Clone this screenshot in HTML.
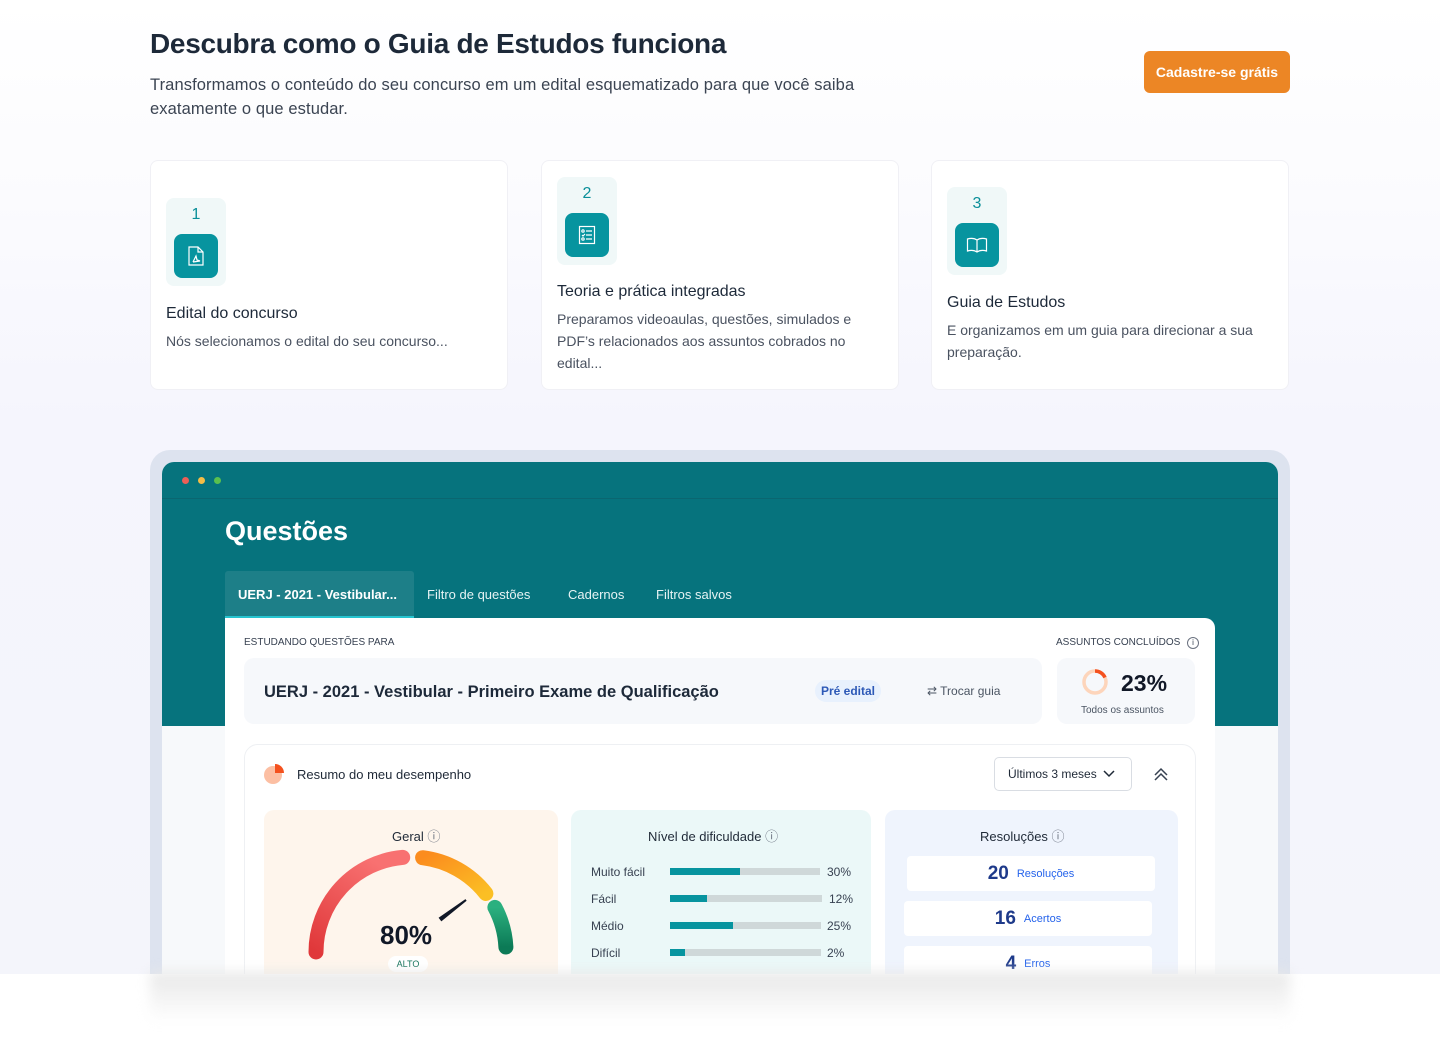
<!DOCTYPE html>
<html><head><meta charset="utf-8">
<style>
*{box-sizing:border-box;margin:0;padding:0}
html,body{width:1440px;height:1038px;overflow:hidden}
body{font-family:"Liberation Sans",sans-serif;color:#1f2937;background:#fff;position:relative}
.bg{position:absolute;left:0;top:0;width:1440px;height:974px;background:linear-gradient(#ffffff 0px,#fbfbfe 200px,#f5f5fd 420px,#f4f5fb 974px)}
.abs{position:absolute}
h1{position:absolute;left:150px;top:28px;font-size:28px;font-weight:700;color:#1d2939;letter-spacing:-0.3px}
.sub{position:absolute;left:150px;top:73px;width:760px;font-size:16.5px;line-height:24px;color:#3b4452;letter-spacing:0.1px}
.btn{position:absolute;left:1144px;top:51px;width:146px;height:42px;background:#ec8625;border-radius:6px;color:#fff;font-size:14px;font-weight:700;text-align:center;line-height:42px}
.card{position:absolute;top:160px;width:358px;height:230px;background:#fff;border:1px solid #f0f0f5;border-radius:8px}
.badge{position:absolute;width:60px;height:88px;background:#f0f8f8;border-radius:8px;text-align:center;color:#0a8f99;font-size:16px;padding-top:8px}
.ico{position:absolute;left:8px;top:36px;width:44px;height:44px;background:#07949f;border-radius:8px;display:flex;align-items:center;justify-content:center}
.ct{position:absolute;font-size:16px;color:#1d2939}
.cd{position:absolute;font-size:14px;line-height:22px;color:#4a5260;width:320px}
.frame{position:absolute;left:150px;top:450px;width:1140px;height:524px;background:#dde3ef;border-radius:20px 20px 0 0}
.win{position:absolute;left:162px;top:462px;width:1116px;height:512px;background:#f7f9fb;border-radius:12px 12px 0 0;overflow:hidden}
.teal{position:absolute;left:0;top:0;width:1116px;height:264px;background:#06737d}
.dot{position:absolute;top:15px;width:7px;height:7px;border-radius:50%}
.tab{position:absolute;top:109px;height:47px;line-height:47px;color:#e6f3f4;font-size:13px}
.panel{position:absolute;left:63px;top:156px;width:990px;height:500px;background:#fff;border-radius:0 10px 0 0}
.small{font-size:10px;color:#374151;letter-spacing:0}
.box{position:absolute;border-radius:10px}
.bar{position:absolute;height:7px;background:#cfd8d9}
.bar i{display:block;height:7px;background:#07949f}
.lbl{position:absolute;font-size:12px;color:#374151}
.res{position:absolute;background:#fff;border-radius:4px;text-align:center;color:#1e3a8a;font-weight:700;font-size:19px}
.res span{font-size:11px;font-weight:400;color:#2563eb;margin-left:8px;vertical-align:2px}
.bottom{position:absolute;left:0;top:974px;width:1440px;height:64px;background:#fff}
.shadow{position:absolute;left:150px;top:972px;width:1140px;height:50px;background:linear-gradient(#e8e8e8,rgba(255,255,255,0));filter:blur(6px)}
</style></head><body>
<div class="bg"></div>
<h1>Descubra como o Guia de Estudos funciona</h1>
<div class="sub">Transformamos o conteúdo do seu concurso em um edital esquematizado para que você saiba exatamente o que estudar.</div>
<div class="btn">Cadastre-se grátis</div>

<div class="card" style="left:150px">
  <div class="badge" style="left:15px;top:37px">1<div class="ico"><svg width="18" height="20" viewBox="0 0 18 20" fill="none" stroke="#fff" stroke-width="1.2"><path d="M2 1h9l5 5v13H2z"/><path d="M11 1v5h5"/><path d="M6 16l3-6 1 4 3 1-7 1"/></svg></div></div>
  <div class="ct" style="left:15px;top:144px">Edital do concurso</div>
  <div class="cd" style="left:15px;top:169px">Nós selecionamos o edital do seu concurso...</div>
</div>
<div class="card" style="left:541px">
  <div class="badge" style="left:15px;top:16px">2<div class="ico"><svg width="18" height="20" viewBox="0 0 18 20" fill="none" stroke="#fff" stroke-width="1.2"><rect x="1.5" y="1.5" width="15" height="17"/><circle cx="5" cy="6" r="1.2"/><circle cx="5" cy="14" r="1.2"/><path d="M4 10l1 1 2-2M8 6h6M8 10h6M8 14h6"/></svg></div></div>
  <div class="ct" style="left:15px;top:122px">Teoria e prática integradas</div>
  <div class="cd" style="left:15px;top:147px">Preparamos videoaulas, questões, simulados e PDF’s relacionados aos assuntos cobrados no edital...</div>
</div>
<div class="card" style="left:931px">
  <div class="badge" style="left:15px;top:26px">3<div class="ico"><svg width="22" height="16" viewBox="0 0 22 16" fill="none" stroke="#fff" stroke-width="1.2"><path d="M11 3C8 1 5 1 1.5 2v12c3.5-1 6.5-1 9.5 1 3-2 6-2 9.5-1V2C17 1 14 1 11 3zM11 3v12"/></svg></div></div>
  <div class="ct" style="left:15px;top:133px">Guia de Estudos</div>
  <div class="cd" style="left:15px;top:158px">E organizamos em um guia para direcionar a sua preparação.</div>
</div>

<div class="frame"></div>
<div class="win">
  <div class="teal"></div>
  <div class="abs" style="left:0;top:36px;width:1116px;height:1px;background:#0a6670"></div>
  <div class="dot" style="left:20px;background:#ec5f57"></div>
  <div class="dot" style="left:36px;background:#f4bd46"></div>
  <div class="dot" style="left:52px;background:#5ac04e"></div>
  <div class="abs" style="left:63px;top:54px;font-size:27px;font-weight:700;color:#fff">Questões</div>
  <div class="abs" style="left:63px;top:109px;width:189px;height:47px;background:#1d7f88;border-radius:3px 3px 0 0;border-bottom:2px solid #26c4cf"></div>
  <div class="tab" style="left:76px;font-weight:700;color:#fff">UERJ - 2021 - Vestibular...</div>
  <div class="tab" style="left:265px">Filtro de questões</div>
  <div class="tab" style="left:406px">Cadernos</div>
  <div class="tab" style="left:494px">Filtros salvos</div>
  <div class="panel">
    <div class="abs small" style="left:19px;top:19px">ESTUDANDO QUESTÕES PARA</div>
    <div class="abs small" style="left:831px;top:19px">ASSUNTOS CONCLUÍDOS <span style="display:inline-block;width:12px;height:12px;border:1px solid #6b7280;border-radius:50%;font-size:8px;text-align:center;line-height:10px;margin-left:4px">i</span></div>
    <div class="box" style="left:19px;top:40px;width:798px;height:66px;background:#f6f8fb"></div>
    <div class="abs" style="left:39px;top:65px;font-size:16.5px;font-weight:700;color:#1d2939">UERJ - 2021 - Vestibular - Primeiro Exame de Qualificação</div>
    <div class="abs" style="left:590px;top:62px;width:66px;height:22px;background:#e8f1fd;border-radius:11px;color:#2d59b7;font-size:12px;font-weight:700;text-align:center;line-height:22px">Pré edital</div>
    <div class="abs" style="left:702px;top:66px;font-size:12px;color:#4b5563">⇄ Trocar guia</div>
    <div class="box" style="left:832px;top:40px;width:138px;height:66px;background:#f6f8fb"></div>
    <svg class="abs" style="left:856px;top:50px" width="28" height="28" viewBox="0 0 28 28"><circle cx="14" cy="14" r="11" fill="none" stroke="#fdd5bb" stroke-width="3.5"/><path d="M14 3a11 11 0 0 1 10 6.5" fill="none" stroke="#f4511e" stroke-width="3.5"/></svg>
    <div class="abs" style="left:896px;top:52px;font-size:23px;font-weight:700;color:#111827">23%</div>
    <div class="abs" style="left:856px;top:87px;font-size:10px;color:#4b5563">Todos os assuntos</div>

    <div class="box" style="left:19px;top:126px;width:952px;height:400px;border:1px solid #eef0f3;border-radius:14px;background:#fff"></div>
    <svg class="abs" style="left:38px;top:145px" width="22" height="22" viewBox="0 0 22 22"><circle cx="10" cy="12" r="9" fill="#fcbfa3"/><path d="M12 1v9h9A9 9 0 0 0 12 1z" fill="#f4511e"/></svg>
    <div class="abs" style="left:72px;top:149px;font-size:13px;color:#1f2937">Resumo do meu desempenho</div>
    <div class="abs" style="left:769px;top:139px;width:138px;height:34px;border:1px solid #d9dde3;border-radius:5px;font-size:12px;line-height:32px;padding-left:13px;color:#1f2937">Últimos 3 meses <svg width="12" height="8" viewBox="0 0 12 8" style="margin-left:3px"><path d="M1 1l5 5 5-5" fill="none" stroke="#1f2937" stroke-width="1.5"/></svg></div>
    <svg class="abs" style="left:928px;top:148px" width="16" height="16" viewBox="0 0 16 16" fill="none" stroke="#374151" stroke-width="1.5"><path d="M2 9l6-6 6 6M2 14l6-6 6 6"/></svg>

    <div class="box" style="left:39px;top:192px;width:294px;height:200px;background:#fef5ec"></div>
    <div class="abs" style="left:167px;top:208px;font-size:13px;color:#1f2937">Geral <span style="color:#6b7280">ⓘ</span></div>
    <svg class="abs" style="left:39px;top:192px" width="294" height="180" viewBox="0 0 294 180">
      <defs><linearGradient id="r" x1="0" y1="1" x2="0.6" y2="0"><stop offset="0" stop-color="#e0383a"/><stop offset="1" stop-color="#f87171"/></linearGradient>
      <linearGradient id="o" x1="0" y1="0" x2="1" y2="1"><stop offset="0" stop-color="#fb8c1e"/><stop offset="1" stop-color="#fbbf24"/></linearGradient>
      <linearGradient id="g" x1="0" y1="0" x2="0" y2="1"><stop offset="0" stop-color="#2bb07f"/><stop offset="1" stop-color="#0c7a56"/></linearGradient></defs>
      <path d="M52 142A95 95 0 0 1 138.7 47.4" fill="none" stroke="url(#r)" stroke-width="15" stroke-linecap="round"/>
      <path d="M158.6 47.7A95 95 0 0 1 221.9 83.5" fill="none" stroke="url(#o)" stroke-width="15" stroke-linecap="round"/>
      <path d="M230.9 97.4A95 95 0 0 1 241.9 137" fill="none" stroke="url(#g)" stroke-width="15" stroke-linecap="round"/>
      <path d="M202 90L176 108l1.5 2z" fill="#111827" stroke="#111827" stroke-width="2"/>
    </svg>
    <div class="abs" style="left:155px;top:302px;font-size:26px;font-weight:700;color:#111827">80%</div>
    <div class="abs" style="left:163px;top:338px;width:40px;height:16px;background:#fff;border-radius:8px;font-size:9px;color:#0c6e55;text-align:center;line-height:16px">ALTO</div>

    <div class="box" style="left:346px;top:192px;width:300px;height:200px;background:#ebf8f8"></div>
    <div class="abs" style="left:423px;top:208px;font-size:13px;color:#1f2937">Nível de dificuldade <span style="color:#6b7280">ⓘ</span></div>
    <div class="lbl" style="left:366px;top:247px">Muito fácil</div><div class="bar" style="left:445px;top:250px;width:150px"><i style="width:70px"></i></div><div class="lbl" style="left:602px;top:247px">30%</div>
    <div class="lbl" style="left:366px;top:274px">Fácil</div><div class="bar" style="left:445px;top:277px;width:152px"><i style="width:37px"></i></div><div class="lbl" style="left:604px;top:274px">12%</div>
    <div class="lbl" style="left:366px;top:301px">Médio</div><div class="bar" style="left:445px;top:304px;width:151px"><i style="width:63px"></i></div><div class="lbl" style="left:602px;top:301px">25%</div>
    <div class="lbl" style="left:366px;top:328px">Difícil</div><div class="bar" style="left:445px;top:331px;width:151px"><i style="width:15px"></i></div><div class="lbl" style="left:602px;top:328px">2%</div>

    <div class="box" style="left:660px;top:192px;width:293px;height:200px;background:#eff4fd"></div>
    <div class="abs" style="left:755px;top:208px;font-size:13px;color:#1f2937">Resoluções <span style="color:#6b7280">ⓘ</span></div>
    <div class="res" style="left:682px;top:238px;width:248px;height:35px;line-height:35px">20<span>Resoluções</span></div>
    <div class="res" style="left:679px;top:283px;width:248px;height:35px;line-height:35px">16<span>Acertos</span></div>
    <div class="res" style="left:679px;top:328px;width:248px;height:35px;line-height:35px">4<span>Erros</span></div>
  </div>
</div>
<div class="bottom"></div>
<div class="shadow"></div>
</body></html>
